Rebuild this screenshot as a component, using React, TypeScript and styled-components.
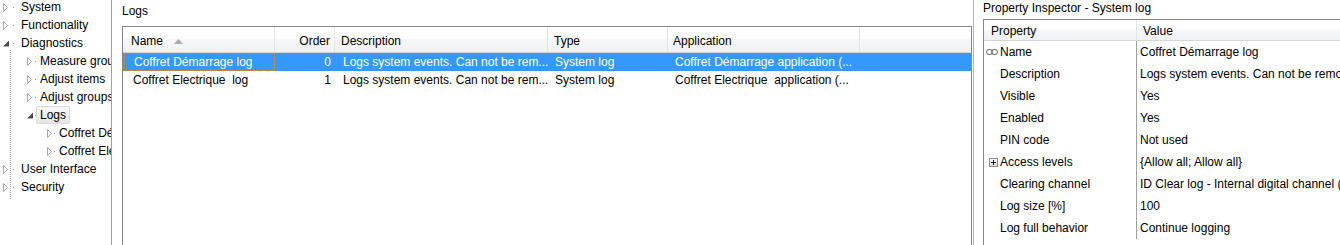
import React from "react";
import styled, { createGlobalStyle } from "styled-components";

const GlobalStyle = createGlobalStyle`
  *, *::before, *::after { box-sizing: border-box; }
  html, body { margin: 0; padding: 0; background: #ffffff; overflow: hidden; }
  body {
    font-family: "Liberation Sans", Arial, sans-serif;
    font-size: 12px;
    color: #000000;
  }
`;

const Screen = styled.div`
  display: flex;
  width: 1340px;
  height: 245px;
  overflow: hidden;
  background: #ffffff;
`;

/* ---------- Tree ---------- */

const TreePanel = styled.div`
  width: 112px;
  flex: none;
  border-right: 1px solid #a0a0a0;
  overflow: hidden;
`;

const TreeList = styled.div`
  margin-top: -2px;
  height: 247px;
  background-image: repeating-linear-gradient(to bottom, #a6a6a6 0 1px, transparent 1px 2px);
  background-repeat: no-repeat;
  background-position: 10px 52px;
  background-size: 1px 150px;
`;

const TreeRow = styled.div<{ $exp: number }>`
  display: flex;
  align-items: center;
  height: 18px;
  padding-left: ${(p) => p.$exp}px;
  white-space: nowrap;
`;

const ExpanderBox = styled.span`
  display: flex;
  align-items: center;
  justify-content: flex-start;
  width: 6px;
  height: 18px;
  flex: none;
`;

const Connector = styled.span<{ $w: number }>`
  width: ${(p) => p.$w}px;
  height: 18px;
  flex: none;
  display: flex;
  align-items: center;
  justify-content: center;
  &::after {
    content: "";
    width: 1px;
    height: 1px;
    background: #9a9a9a;
  }
`;

const TreeLabel = styled.span<{ $selected?: boolean }>`
  display: inline-flex;
  align-items: center;
  height: 18px;
  padding: 0 3px;
  border: 1px solid ${(p) => (p.$selected ? "#d9d9d9" : "transparent")};
  border-radius: 2px;
  background: ${(p) =>
    p.$selected ? "linear-gradient(to bottom, #f8f8f8, #e5e5e5)" : "transparent"};
  margin-left: -1px;
`;

const Collapsed = () => (
  <svg width="6" height="9" viewBox="0 0 6 9">
    <polygon points="0.5,0.5 4.5,4.5 0.5,8.5" fill="#ffffff" stroke="#a6a6a6" strokeWidth="1" />
  </svg>
);

const Expanded = () => (
  <svg width="6" height="7" viewBox="0 0 6 7">
    <polygon points="6,0.5 6,6.5 0,6.5" fill="#4a4a4a" />
  </svg>
);

type TreeItem = { label: string; level: number; expanded?: boolean; selected?: boolean };

const treeItems: TreeItem[] = [
  { label: "System", level: 0 },
  { label: "Functionality", level: 0 },
  { label: "Diagnostics", level: 0, expanded: true },
  { label: "Measure groups", level: 1 },
  { label: "Adjust items", level: 1 },
  { label: "Adjust groups", level: 1 },
  { label: "Logs", level: 1, expanded: true, selected: true },
  { label: "Coffret Démarrage log", level: 2 },
  { label: "Coffret Electrique  log", level: 2 },
  { label: "User Interface", level: 0 },
  { label: "Security", level: 0 },
];

const expX = [3, 27, 47];
const labelX = [18, 37, 56];

/* ---------- Logs list ---------- */

const LogsPanel = styled.div`
  width: 862px;
  flex: none;
  padding-left: 10px;
  display: flex;
  flex-direction: column;
  border-right: 1px solid #b4b4b4;
`;

const PanelTitle = styled.div<{ $h: number; $pt: number }>`
  height: ${(p) => p.$h}px;
  padding-top: ${(p) => p.$pt}px;
  line-height: 15px;
  white-space: nowrap;
  flex: none;
`;

const ListBox = styled.div`
  width: 850px;
  flex: 1;
  border: 1px solid #828790;
  border-bottom: none;
  overflow: hidden;
`;

const ListHeader = styled.div`
  display: flex;
  height: 26px;
  padding-top: 2px;
  border-bottom: 1px solid #d5d5d5;
  background: linear-gradient(to bottom, #ffffff 0%, #ffffff 45%, #f6f7f8 50%, #f1f2f4 100%);
`;

const HeaderCell = styled.div<{ $w?: number; $right?: boolean; $pl?: number; $pr?: number }>`
  ${(p) => (p.$w ? `width: ${p.$w}px; flex: none;` : "flex: 1;")}
  display: flex;
  align-items: center;
  justify-content: ${(p) => (p.$right ? "flex-end" : "flex-start")};
  padding-left: ${(p) => p.$pl ?? 0}px;
  padding-right: ${(p) => p.$pr ?? 0}px;
  margin-top: -2px;
  padding-top: 2px;
  border-right: ${(p) => (p.$w ? "1px solid #e3e4e6" : "none")};
  white-space: nowrap;
`;

const SortArrow = styled.span`
  display: inline-flex;
  margin-left: 11px;
  margin-top: 1px;
`;

const ListRow = styled.div<{ $selected?: boolean }>`
  display: flex;
  height: 18px;
  background: ${(p) => (p.$selected ? "#3399ff" : "transparent")};
  color: ${(p) => (p.$selected ? "#ffffff" : "#000000")};
`;

const Cell = styled.div<{ $w: number; $right?: boolean; $pl?: number; $pr?: number; $focus?: boolean }>`
  width: ${(p) => p.$w}px;
  flex: none;
  display: flex;
  align-items: center;
  justify-content: ${(p) => (p.$right ? "flex-end" : "flex-start")};
  padding-left: ${(p) => p.$pl ?? 0}px;
  padding-right: ${(p) => p.$pr ?? 0}px;
  white-space: pre;
  overflow: hidden;
  ${(p) => (p.$focus ? "outline: 1px dotted #d38b3f; outline-offset: -1px; margin-left: 1px; width: " + (p.$w - 1) + "px;" : "")}
`;

const columns = [
  { key: "name", title: "Name", w: 152, hpl: 8, cpl: 10 },
  { key: "order", title: "Order", w: 60, right: true, hpr: 4, cpr: 4 },
  { key: "desc", title: "Description", w: 213, hpl: 6, cpl: 8 },
  { key: "type", title: "Type", w: 120, hpl: 6, cpl: 7 },
  { key: "app", title: "Application", w: 192, hpl: 5, cpl: 7 },
];

const rows = [
  {
    name: "Coffret Démarrage log",
    order: "0",
    desc: "Logs system events. Can not be rem...",
    type: "System log",
    app: "Coffret Démarrage application (...",
    selected: true,
  },
  {
    name: "Coffret Electrique  log",
    order: "1",
    desc: "Logs system events. Can not be rem...",
    type: "System log",
    app: "Coffret Electrique  application (...",
  },
];

/* ---------- Property inspector ---------- */

const InspectorPanel = styled.div`
  flex: 1;
  min-width: 0;
  padding-left: 9px;
  display: flex;
  flex-direction: column;
`;

const Grid = styled.div`
  flex: 1;
  border-left: 1px solid #828790;
  border-top: 1px solid #828790;
  width: 420px;
  overflow: hidden;
`;

const GridHeader = styled.div`
  display: flex;
  height: 21px;
  border-bottom: 1px solid #d5d5d5;
  background: linear-gradient(to bottom, #ffffff 0%, #ffffff 45%, #f6f7f8 50%, #f1f2f4 100%);
`;

const GridHeadCell = styled.div<{ $w?: number; $pl: number }>`
  ${(p) => (p.$w ? `width: ${p.$w}px; flex: none; border-right: 1px solid #e3e4e6;` : "flex: 1;")}
  display: flex;
  align-items: center;
  padding-left: ${(p) => p.$pl}px;
  padding-top: 1px;
  white-space: nowrap;
`;

const PropRow = styled.div`
  display: flex;
  height: 22px;
`;

const PropName = styled.div`
  width: 153px;
  flex: none;
  display: flex;
  align-items: center;
  border-right: 1px solid #a0a0a0;
  white-space: nowrap;
`;

const IconSlot = styled.span`
  width: 16px;
  flex: none;
  display: flex;
  align-items: center;
  justify-content: flex-end;
  padding-right: 2px;
`;

const PropValue = styled.div`
  flex: 1;
  display: flex;
  align-items: center;
  padding-left: 3px;
  white-space: nowrap;
  overflow: hidden;
`;

const LinkIcon = () => (
  <svg width="12" height="6" viewBox="0 0 12 6">
    <rect x="0.5" y="0.5" width="6" height="5" rx="2.5" fill="none" stroke="#6a6a6a" strokeWidth="1" />
    <rect x="5.5" y="0.5" width="6" height="5" rx="2.5" fill="none" stroke="#6a6a6a" strokeWidth="1" />
  </svg>
);

const PlusBox = () => (
  <svg width="9" height="9" viewBox="0 0 9 9">
    <defs>
      <linearGradient id="pb" x1="0" y1="0" x2="0" y2="1">
        <stop offset="0" stopColor="#ffffff" />
        <stop offset="1" stopColor="#d8d8d8" />
      </linearGradient>
    </defs>
    <rect x="0.5" y="0.5" width="8" height="8" fill="url(#pb)" stroke="#8e8f8f" />
    <rect x="2" y="4" width="5" height="1" fill="#1a1a1a" />
    <rect x="4" y="2" width="1" height="5" fill="#1a1a1a" />
  </svg>
);

const props: { name: string; value: string; icon?: "link" | "plus" }[] = [
  { name: "Name", value: "Coffret Démarrage log", icon: "link" },
  { name: "Description", value: "Logs system events. Can not be removed." },
  { name: "Visible", value: "Yes" },
  { name: "Enabled", value: "Yes" },
  { name: "PIN code", value: "Not used" },
  { name: "Access levels", value: "{Allow all; Allow all}", icon: "plus" },
  { name: "Clearing channel", value: "ID Clear log - Internal digital channel (0)" },
  { name: "Log size [%]", value: "100" },
  { name: "Log full behavior", value: "Continue logging" },
];

export default function App() {
  return (
    <>
      <GlobalStyle />
      <Screen>
        <TreePanel>
          <TreeList>
            {treeItems.map((t, i) => (
              <TreeRow key={i} $exp={expX[t.level]}>
                <ExpanderBox>{t.expanded ? <Expanded /> : <Collapsed />}</ExpanderBox>
                <Connector $w={labelX[t.level] - expX[t.level] - 6} />
                <TreeLabel $selected={t.selected}>{t.label}</TreeLabel>
              </TreeRow>
            ))}
          </TreeList>
        </TreePanel>

        <LogsPanel>
          <PanelTitle $h={26} $pt={4}>Logs</PanelTitle>
          <ListBox>
            <ListHeader>
              {columns.map((c) => (
                <HeaderCell key={c.key} $w={c.w} $right={c.right} $pl={c.hpl} $pr={c.hpr}>
                  {c.title}
                  {c.key === "name" && (
                    <SortArrow>
                      <svg width="9" height="5" viewBox="0 0 9 5">
                        <polygon points="4.5,0 9,5 0,5" fill="#a7acb3" />
                      </svg>
                    </SortArrow>
                  )}
                </HeaderCell>
              ))}
              <HeaderCell />
            </ListHeader>
            {rows.map((r, i) => (
              <ListRow key={i} $selected={r.selected}>
                {columns.map((c) => (
                  <Cell
                    key={c.key}
                    $w={c.w}
                    $right={c.right}
                    $pl={c.cpl}
                    $pr={c.cpr}
                    $focus={r.selected && c.key === "name"}
                  >
                    {(r as any)[c.key]}
                  </Cell>
                ))}
              </ListRow>
            ))}
          </ListBox>
        </LogsPanel>

        <InspectorPanel>
          <PanelTitle $h={19} $pt={1}>Property Inspector - System log</PanelTitle>
          <Grid>
            <GridHeader>
              <GridHeadCell $w={153} $pl={7}>Property</GridHeadCell>
              <GridHeadCell $pl={6}>Value</GridHeadCell>
            </GridHeader>
            {props.map((p) => (
              <PropRow key={p.name}>
                <PropName>
                  <IconSlot>
                    {p.icon === "link" && <LinkIcon />}
                    {p.icon === "plus" && <PlusBox />}
                  </IconSlot>
                  {p.name}
                </PropName>
                <PropValue>{p.value}</PropValue>
              </PropRow>
            ))}
          </Grid>
        </InspectorPanel>
      </Screen>
    </>
  );
}
